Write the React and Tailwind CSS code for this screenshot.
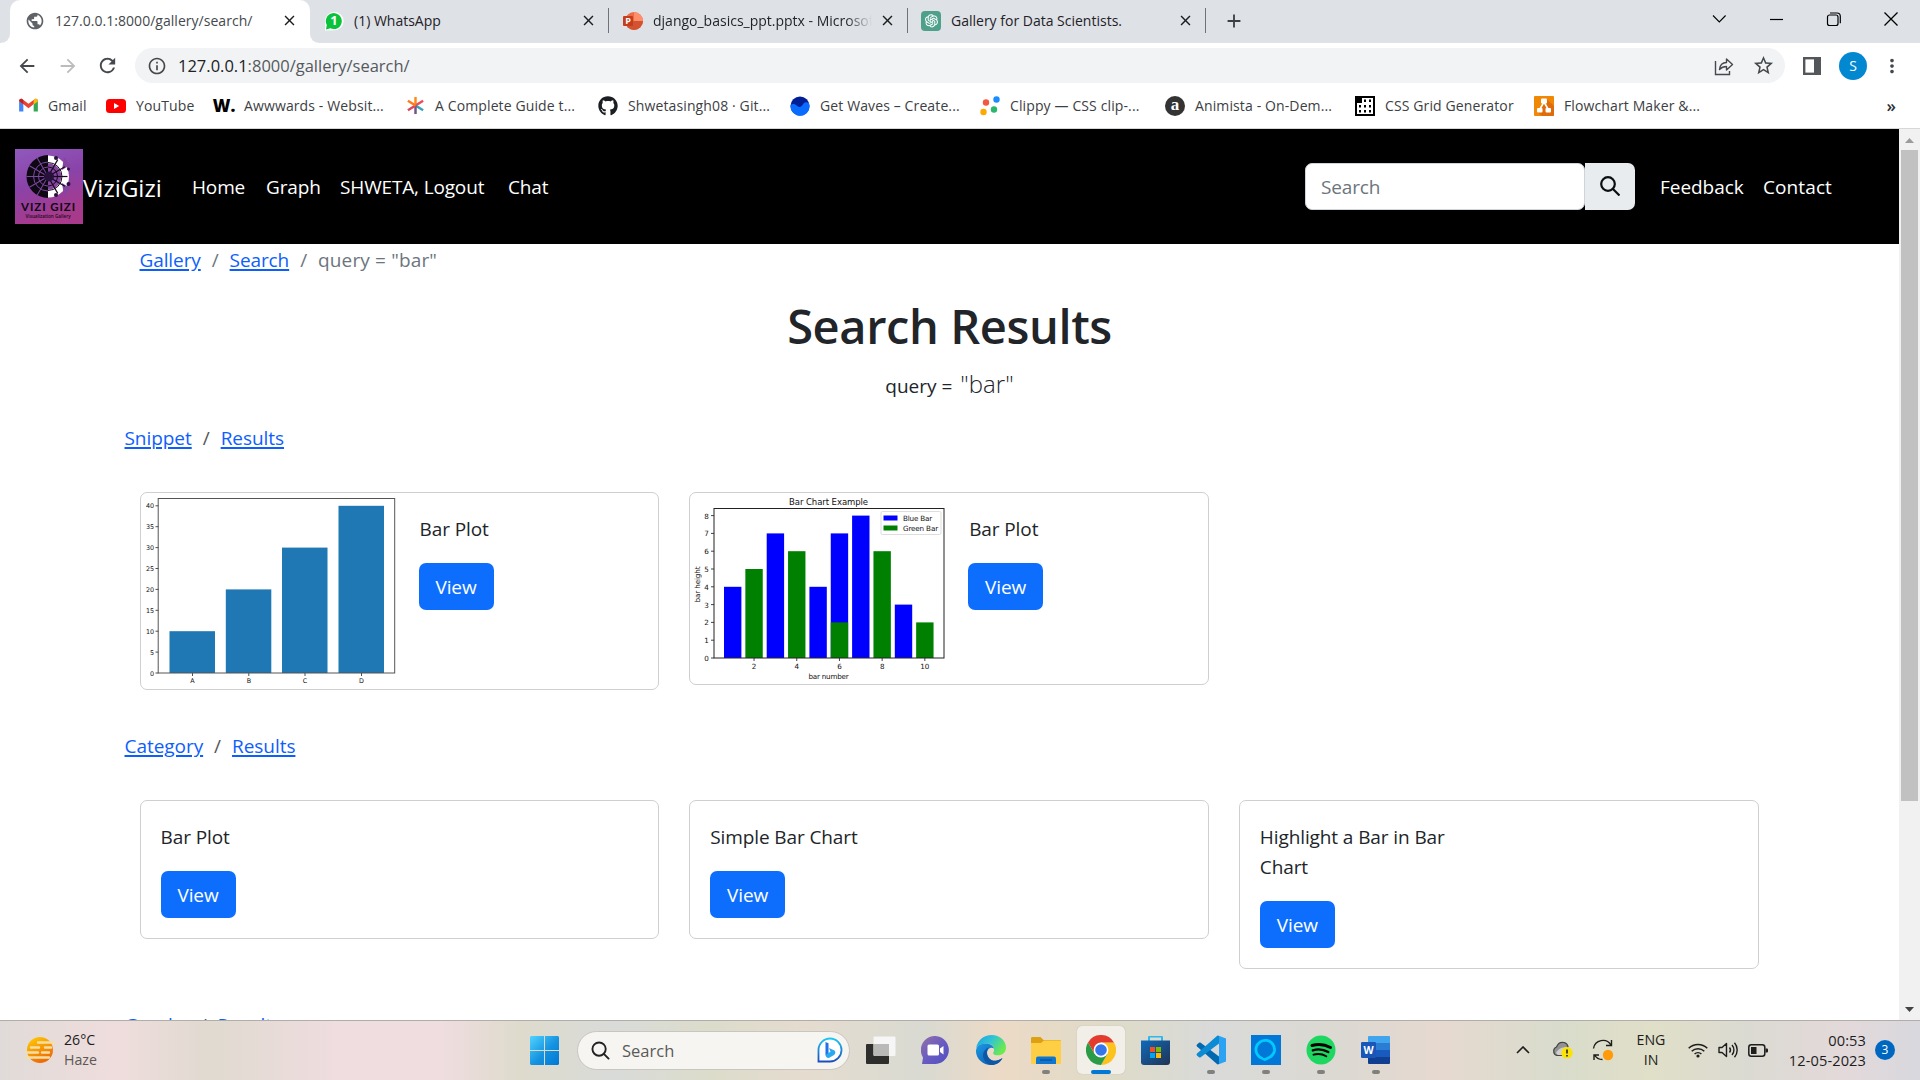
import React from "react";
import { MdArrowBack, MdArrowForward, MdRefresh, MdOutlineInfo, MdStarBorder, MdMoreVert, MdPublic, MdClose, MdAdd } from "react-icons/md";
import { FaGithub } from "react-icons/fa";
import { AiOutlineOpenAI } from "react-icons/ai";

/* ---------- browser chrome ---------- */

const WhatsAppIcon = () => (
  <svg viewBox="0 0 20 20" className="h-5 w-5 shrink-0">
    <path d="M1 19.5V10a9.3 9.3 0 1 1 9.3 9.3z" fill="#fff" />
    <path d="M2 18.6l.8-4.6A8 8 0 1 1 6.300 17.300z" fill="#0bc33a" />
    <text x="10" y="14.300" textAnchor="middle" fontSize="13" fontWeight="700" fill="#fff" fontFamily="Open Sans">1</text>
  </svg>
);

const PowerpointIcon = () => (
  <svg viewBox="0 0 20 20" className="h-5 w-5 shrink-0">
    <circle cx="11" cy="10" r="9" fill="#ed6c47" />
    <path d="M11 1a9 9 0 0 1 9 9h-9z" fill="#ff8f6b" />
    <path d="M2 10h18a9 9 0 0 1-18 0z" fill="#d35230" />
    <rect x="0" y="5" width="10" height="10" rx="1" fill="#c43e1c" />
    <text x="5" y="13.200" textAnchor="middle" fontSize="9" fontWeight="700" fill="#fff" fontFamily="Open Sans">P</text>
  </svg>
);

const OpenAiIcon = () => (
  <span className="flex h-5 w-5 shrink-0 items-center justify-center rounded-[4px] bg-[#4fa08b] text-white">
    <AiOutlineOpenAI size={17} />
  </span>
);

function Tab({ icon, title, width, pad, divider, fade, titleWidth }) {
  return (
    <div className={`flex h-[43px] items-center pb-[2px] ${width} ${pad}`}>
      {icon}
      <span className={`ml-[10px] overflow-hidden text-[14px] whitespace-nowrap text-[#1f2226] ${titleWidth} ${fade ? "[mask-image:linear-gradient(90deg,#000_88%,transparent)]" : ""}`}>{title}</span>
      <MdClose size={17} className="ml-auto shrink-0 text-[#1c1d1f]" />
      <span className={`ml-[11px] h-[25px] w-px ${divider ? "bg-[#6f7276]" : ""}`} />
    </div>
  );
}

function TabStrip() {
  return (
    <div className="flex h-[43px] bg-[#dee1e6]">
      <div className="flex h-full w-[10px] bg-white">
        <div className="h-full w-full rounded-br-[9px] bg-[#dee1e6]" />
      </div>
      <div className="w-[300px] bg-[#dee1e6]">
        <div className="flex h-[43px] items-center rounded-t-[10px] bg-white pb-[2px] pl-[15px]">
          <MdPublic size={20} className="shrink-0 text-[#5f6368]" />
          <span className="ml-[10px] text-[14px] tracking-[0.03px] whitespace-nowrap text-[#45494d]">127.0.0.1:8000/gallery/search/</span>
          <MdClose size={17} className="mr-[12px] ml-auto shrink-0 text-[#1c1d1f]" />
        </div>
      </div>
      <div className="flex h-full bg-white">
        <div className="flex h-full rounded-bl-[9px] bg-[#dee1e6]">
          <Tab icon={<WhatsAppIcon />} title="(1) WhatsApp" width="w-[299px]" pad="pl-[14px]" titleWidth="w-[200px]" divider />
          <Tab icon={<PowerpointIcon />} title="django_basics_ppt.pptx - Microsoft" width="w-[299px]" pad="pl-[14px]" titleWidth="w-[219px]" divider fade />
          <Tab icon={<OpenAiIcon />} title="Gallery for Data Scientists." width="w-[298px]" pad="pl-[13px]" titleWidth="w-[200px]" divider />
        </div>
      </div>
      <div className="flex h-[41px] w-[56px] items-center justify-center text-[#3c4043]">
        <MdAdd size={22} />
      </div>
      <div className="ml-auto flex h-[37px] items-center text-black">
        <svg width="57" height="20" viewBox="0 0 57 20" fill="none" stroke="currentColor" strokeWidth="1.1"><path d="M22 6.500l6.300 6.500 6.300-6.500" /></svg>
        <svg width="57" height="20" viewBox="0 0 57 20" fill="none" stroke="currentColor" strokeWidth="1.2"><path d="M22 10.500h13" /></svg>
        <svg width="58" height="20" viewBox="0 0 58 20" fill="none" stroke="currentColor" strokeWidth="1.2"><rect x="22.500" y="6" width="10.500" height="10.500" rx="2" /><path d="M25 4h7a3.300 3.300 0 0 1 3.300 3.300v7" /></svg>
        <svg width="57" height="20" viewBox="0 0 57 20" fill="none" stroke="currentColor" strokeWidth="1.300"><path d="M21.500 3.500l13 13M34.500 3.500l-13 13" /></svg>
      </div>
    </div>
  );
}

function Toolbar() {
  return (
    <div className="flex h-[47px] items-center bg-white pb-[2px] text-[#45494d]">
      <MdArrowBack size={22} className="ml-[16px]" />
      <MdArrowForward size={22} className="ml-[19px] text-[#babcbe]" />
      <MdRefresh size={23} className="ml-[17px]" />
      <div className="ml-[16px] flex h-[35px] w-[1650px] items-center rounded-full bg-[#f1f3f4] pr-[10px] pl-[12px]">
        <MdOutlineInfo size={20} />
        <span className="mt-px ml-[11px] text-[16.500px] whitespace-nowrap text-[#55595e]"><span className="text-[#202124]">127.0.0.1</span>:8000/gallery/search/</span>
        <svg viewBox="0 0 20 20" className="ml-auto h-[20px] w-[20px]" fill="none" stroke="currentColor" strokeWidth="1.4"><path d="M1.500 5v13.500h14V15" /><path d="M5.500 13.500c.5-4.500 3-7 7-7V3l6 5.500-6 5.500v-3.500c-3 0-5 .8-7 3z" strokeLinejoin="round" /></svg>
        <MdStarBorder size={23} className="ml-[18px] text-[#45494d]" />
      </div>
      <svg viewBox="0 0 18 18" className="ml-[18px] h-[18px] w-[18px]"><rect x="1.200" y="1.200" width="15.600" height="15.600" fill="none" stroke="#53575c" strokeWidth="2.400" /><rect x="11" y="1" width="6" height="16" fill="#53575c" /></svg>
      <span className="ml-[18px] flex h-[28px] w-[28px] items-center justify-center rounded-full bg-[#0288d1] text-[14px] text-white">S</span>
      <MdMoreVert size={22} className="ml-[14px]" />
    </div>
  );
}

const bookmarks = [
  { w: "w-[88px]", label: "Gmail", icon: <svg viewBox="0 0 20 16" className="h-[15px] w-[19px]"><path d="M0 3v11.500h4.500V7z" fill="#4285f4" /><path d="M20 3v11.500h-4.500V7z" fill="#34a853" /><path d="M0 3C0 .8 2 .2 3.500 1.300L10 6l6.500-4.700C18 .2 20 .8 20 3l-10 7.800z" fill="#ea4335" /><path d="M15.500 2v5L20 3.500C20 1 18 .2 16.500 1.300z" fill="#fbbc04" /><path d="M4.500 2v5L0 3.500C0 1 2 .2 3.500 1.300z" fill="#c5221f" /></svg> },
  { w: "w-[108px]", label: "YouTube", icon: <svg viewBox="0 0 20 14" className="h-[14px] w-[20px]"><rect width="20" height="14" rx="3.500" fill="#f00" /><path d="M8 4l5.200 3L8 10z" fill="#fff" /></svg> },
  { w: "w-[191px]", label: "Awwwards - Websit...", icon: <span className="text-[17px] leading-none font-extrabold text-black">W.</span> },
  { w: "w-[193px]", label: "A Complete Guide t...", icon: <svg viewBox="0 0 20 20" className="h-[19px] w-[19px]" fill="none" strokeWidth="2.600"><path d="M10 10V1" stroke="#ff8a18" /><path d="M10 10l8-5" stroke="#ef4b56" /><path d="M10 10l8 5" stroke="#38a3b5" /><path d="M10 10v9" stroke="#71558a" /><path d="M10 10l-8 5" stroke="#e0455c" /><path d="M10 10L2 5" stroke="#ff7a18" /></svg> },
  { w: "w-[192px]", label: "Shwetasingh08 · Git...", icon: <FaGithub size={20} color="#1b1f23" /> },
  { w: "w-[190px]", label: "Get Waves – Create...", icon: <svg viewBox="0 0 20 20" className="h-5 w-5"><circle cx="10" cy="10" r="9.500" fill="#001e96" /><path d="M.6 9c2-1.500 4-1.500 6.400.8 3 2.800 5 0 6-1.600 1.500-2.200 4-2.300 6-1A9.500 9.500 0 1 1 .6 9z" fill="#0a6cff" /></svg> },
  { w: "w-[185px]", label: "Clippy — CSS clip-...", icon: <svg viewBox="0 0 20 20" className="h-5 w-5"><circle cx="6" cy="6.500" r="3.200" fill="#f4583f" /><circle cx="16.500" cy="3.500" r="3.200" fill="#1a8cff" /><circle cx="14" cy="13.500" r="3.200" fill="#2cb56c" /><circle cx="3.500" cy="16" r="3.200" fill="#ffa800" /></svg> },
  { w: "w-[190px]", label: "Animista - On-Dem...", icon: <span className="flex h-5 w-5 items-center justify-center rounded-full bg-[#333] pb-[2px] font-['Liberation_Serif',serif] text-[17px] leading-none font-bold text-white">a</span> },
  { w: "w-[179px]", label: "CSS Grid Generator", icon: <svg viewBox="0 0 20 20" className="h-5 w-5"><rect x="1" y="1" width="18" height="18" fill="#fff" stroke="#000" strokeWidth="2" /><path d="M0 0h7v7H0zM9 3.500h2v2.500H9zM14 3.500h2v2.500h-2zM4 9h2v2.500H4zM9 9h2v2.500H9zM14 9h2v2.500h-2zM4 14h2v2.500H4zM9 14h2v2.500H9zM14 14h2v2.500h-2z" fill="#000" /></svg> },
  { w: "w-[190px]", label: "Flowchart Maker &...", icon: <svg viewBox="0 0 20 20" className="h-5 w-5"><rect width="20" height="20" rx="1" fill="#f08705" /><path d="M12.500 3l7.500 7v9a1 1 0 0 1-1 1H8l-4.500-4z" fill="#df6c0c" /><path d="M10 6l-4 7M10 6l4 7" stroke="#fff" strokeWidth="1.600" /><rect x="7" y="2.500" width="6" height="5" rx="1" fill="#fff" /><rect x="3" y="12" width="5.500" height="4.500" rx="1" fill="#fff" /><rect x="11.500" y="12" width="5.500" height="4.500" rx="1" fill="#fff" /></svg> },
];

function BookmarksBar() {
  return (
    <div className="flex h-[39px] items-center border-b border-[#d5d7da] bg-white pb-[7px] pl-[18px]">
      {bookmarks.map((b) => (
        <div key={b.label} className={`flex shrink-0 items-center ${b.w}`}>
          <span className="flex w-5 shrink-0 items-center justify-center">{b.icon}</span>
          <span className="ml-[10px] text-[14px] tracking-[0.12px] whitespace-nowrap text-[#3c4043]">{b.label}</span>
        </div>
      ))}
      <span className="mr-[24px] ml-auto text-[17px] leading-none font-semibold text-[#2c2f33]">»</span>
    </div>
  );
}

/* ---------- site ---------- */

function Logo() {
  const spokes = [0, 30, 60, 90, 120, 150, 180, 210, 240, 270, 300, 330];
  return (
    <svg viewBox="0 0 68 75" className="h-[75px] w-[68px] shrink-0">
      <defs>
        <linearGradient id="lg" x1="0" y1="0" x2=".3" y2="1">
          <stop offset="0" stopColor="#9059bd" /><stop offset=".5" stopColor="#8a43a8" /><stop offset="1" stopColor="#a83a8c" />
        </linearGradient>
      </defs>
      <rect width="68" height="75" fill="url(#lg)" />
      <path d="M33 6a21.500 21.500 0 0 0 0 43z" fill="#0d0812" />
      <path d="M33 6.500a21 21 0 0 1 0 42v-8a13 13 0 0 0 0-26z" fill="#fff" />
      <path d="M33 14.500a13 13 0 0 1 0 26z" fill="#84459f" />
      <path d="M49 8l6 8-8 5zM49 47l6-8-8-5z" fill="#84459f" />
      <g stroke="#7d48a3" strokeWidth="1" fill="none">
        <path d="M33 13a14.500 14.500 0 0 0 0 29M33 18a9.500 9.500 0 0 0 0 19" />
        {spokes.slice(7).map((a) => <path key={a} d="M33 27.500V6" transform={`rotate(${a} 33 27.500)`} />)}
      </g>
      <g stroke="#15091c" strokeWidth="1.200" fill="none">
        {spokes.slice(1, 6).map((a) => <path key={a} d="M33 27.500V8" transform={`rotate(${a} 33 27.500)`} />)}
        <path d="M33 18a9.500 9.500 0 0 1 0 19M33 13.500a14 14 0 0 1 0 28" strokeWidth="1" />
      </g>
      <g fill="#26123a"><circle cx="41" cy="9" r="2" /><circle cx="53.500" cy="20" r="1.500" /><circle cx="53.500" cy="35" r="2" /><circle cx="41" cy="46" r="2" /><circle cx="34" cy="27.500" r="5" /></g>
      <text x="33" y="61.500" textAnchor="middle" fontSize="11.500" fontWeight="700" fill="#0d0812" fontFamily="Lato, sans-serif" textLength="54">VIZI GIZI</text>
      <text x="33" y="68.500" textAnchor="middle" fontSize="4.600" fontWeight="600" fill="#1d0a20" fontFamily="Open Sans" textLength="45">Visualization Gallery</text>
    </svg>
  );
}

function Navbar() {
  return (
    <nav className="flex h-[115px] shrink-0 items-center bg-black pr-[66px] pb-px pl-[15px] text-[19px] tracking-[-0.15px] whitespace-nowrap text-white">
      <Logo />
      <a className="w-[109px] pt-[3px] text-[24px] tracking-[0.05px]">ViziGizi</a>
      <a className="w-[74px] pt-[3px]">Home</a>
      <a className="w-[74px] pt-[3px]">Graph</a>
      <a className="w-[168px] pt-[3px]">SHWETA, Logout</a>
      <a className="pt-[3px]">Chat</a>
      <div className="mr-[25px] ml-auto flex h-[47px] w-[330px]">
        <div className="flex w-[280px] items-center rounded-[7px] border border-[#ced4da] bg-white pt-[3px] pl-[15px] text-[#6c757d]">Search</div>
        <div className="flex w-[50px] items-center justify-center rounded-r-[7px] bg-[#e9ecef]">
          <svg viewBox="0 0 20 20" className="h-5 w-5" fill="none" stroke="#0b0d10" strokeWidth="2.200"><circle cx="8" cy="8" r="6.800" /><path d="M13 13l6.500 6.500" /></svg>
        </div>
      </div>
      <a className="w-[103px] pt-[3px] tracking-[-0.05px]">Feedback</a>
      <a className="w-[70px] pt-[3px] tracking-[0.1px]">Contact</a>
    </nav>
  );
}

const Link = ({ children }) => (
  <a className="text-[#0d5efd] underline decoration-[1.500px] underline-offset-[2px]">{children}</a>
);

const SectionTrail = ({ name }) => (
  <div className="-ml-[15px] flex h-[30px] items-center gap-[11px] tracking-[-0.05px]">
    <Link>{name}</Link><span className="text-[#555]">/</span><Link>Results</Link>
  </div>
);

const ViewButton = () => (
  <button className="flex h-[47px] w-[75px] items-center justify-center rounded-[7px] bg-[#0d6efd] pt-[2px] text-[19px] tracking-[-0.1px] text-white">View</button>
);

function PlotABCD() {
  const bars = [["A", 29, 10], ["B", 85.300, 20], ["C", 141.500, 30], ["D", 198, 40]];
  return (
    <svg viewBox="0 0 256 195" className="h-[195px] w-[256px] shrink-0" fontFamily="DejaVu Sans" fontSize="6.400" fill="#111">
      {bars.map(([l, x, v]) => (
        <g key={l}>
          <rect x={x - 0.500} y={180 - v * 4.180} width="45.500" height={v * 4.180} fill="#1f77b4" />
          <path d={`M${x + 22.500} 180v3`} stroke="#222" strokeWidth=".8" />
          <text x={x + 22.500} y="190" textAnchor="middle">{l}</text>
        </g>
      ))}
      {[0, 5, 10, 15, 20, 25, 30, 35, 40].map((v) => (
        <g key={v}>
          <path d={`M14.500 ${180 - v * 4.180}h3`} stroke="#222" strokeWidth=".8" />
          <text x="13" y={182.500 - v * 4.180} textAnchor="end">{v}</text>
        </g>
      ))}
      <rect x="17.200" y="5.500" width="236.500" height="174.500" fill="none" stroke="#555" />
    </svg>
  );
}

function PlotBlueGreen() {
  const blue = [[1, 4], [3, 7], [5, 4], [6, 7], [7, 8], [9, 3]];
  const green = [[2, 5], [4, 6], [6, 2], [8, 6], [10, 2]];
  const x = (n) => 42.700 + (n - 1) * 21.350;
  const y = (v) => 165 - v * 17.800;
  return (
    <svg viewBox="0 0 256 190" className="h-[190px] w-[256px] shrink-0" fontFamily="DejaVu Sans" fontSize="7.200" fill="#111">
      {blue.map(([n, v]) => <rect key={n} x={x(n) - 8.700} y={y(v)} width="17.400" height={v * 17.800} fill="#00f" />)}
      {green.map(([n, v]) => <rect key={n} x={x(n) - 8.700} y={y(v)} width="17.400" height={v * 17.800} fill="#008000" />)}
      {[0, 1, 2, 3, 4, 5, 6, 7, 8].map((v) => (
        <g key={v}><path d={`M21 ${y(v)}h3`} stroke="#111" strokeWidth=".8" /><text x="18.800" y={y(v) + 3} textAnchor="end">{v}</text></g>
      ))}
      {[2, 4, 6, 8, 10].map((n) => (
        <g key={n}><path d={`M${x(n)} 165v3`} stroke="#111" strokeWidth=".8" /><text x={x(n)} y="176" textAnchor="middle">{n}</text></g>
      ))}
      <rect x="24" y="15.500" width="230" height="149.500" fill="none" stroke="#222" />
      <text x="138.500" y="11.500" textAnchor="middle" fontSize="8.500" textLength="79">Bar Chart Example</text>
      <text x="138.500" y="185.500" textAnchor="middle" textLength="40">bar number</text>
      <text x="9.500" y="91.500" textAnchor="middle" transform="rotate(-90 9.500 91.500)" textLength="36">bar height</text>
      <rect x="191" y="18.500" width="60" height="23" rx="1.500" fill="#fff" fillOpacity=".8" stroke="#ddd" />
      <rect x="193.500" y="22.500" width="14" height="5" fill="#00f" />
      <rect x="193.500" y="32.500" width="14" height="5" fill="#008000" />
      <text x="213" y="27.800" textLength="29">Blue Bar</text>
      <text x="213" y="38" textLength="35">Green Bar</text>
    </svg>
  );
}

const cardBase = "flex rounded-[7px] border border-[#cfcfcf] bg-white";

function SnippetCard({ plot, height }) {
  return (
    <div className={`${cardBase} ${height}`}>
      {plot}
      <div className="flex flex-col items-start pt-[20px] pl-[22px]">
        <p className="h-[50px] pl-px leading-[32px]">Bar Plot</p>
        <ViewButton />
      </div>
    </div>
  );
}

function CategoryCard({ title }) {
  return (
    <div className={`${cardBase} flex-col items-start self-start pt-[21px] pb-[20px] pl-[20px]`}>
      <p className="mb-[19px] w-[200px] leading-[30px]">{title}</p>
      <ViewButton />
    </div>
  );
}

function Page() {
  return (
    <main className="flex h-[891px] w-[1899px] flex-col overflow-hidden bg-white">
      <Navbar />
      <div className="flex w-[1758.500px] flex-col pl-[139.500px] text-[19px] tracking-[-0.1px] text-[#212529]">
        <div className="flex h-[32px] items-center gap-[11px] text-[#6c757d]">
          <Link>Gallery</Link><span>/</span><Link>Search</Link><span>/</span><span className="tracking-[0.15px]">query = "bar"</span>
        </div>
      </div>
      <h1 className="mt-[20px] text-center text-[47px] leading-[60px] font-semibold tracking-[-0.4px] text-[#212529]">Search Results</h1>
      <p className="mt-[9px] flex h-[38px] items-baseline justify-center gap-[8px] text-[19px] text-[#212529]">
        query = <span className="text-[24px] leading-[38px] font-light">"bar"</span>
      </p>
      <div className="flex w-[1758.500px] flex-col pl-[139.500px] text-[19px] tracking-[-0.1px] text-[#212529]">
        <div className="mt-[20px]"><SectionTrail name="Snippet" /></div>
        <div className="mt-[39px] grid grid-cols-3 items-start gap-[30px]">
          <SnippetCard plot={<PlotABCD />} height="h-[198px]" />
          <SnippetCard plot={<PlotBlueGreen />} height="h-[193px]" />
        </div>
        <div className="mt-[41px]"><SectionTrail name="Category" /></div>
        <div className="mt-[39px] grid grid-cols-3 items-start gap-[30px]">
          <CategoryCard title="Bar Plot" />
          <CategoryCard title="Simple Bar Chart" />
          <CategoryCard title="Highlight a Bar in Bar Chart" />
        </div>
        <div className="mt-[41px]"><SectionTrail name="Graphs" /></div>
      </div>
    </main>
  );
}

function Scrollbar() {
  return (
    <div className="flex h-[891px] w-[21px] flex-col items-center bg-[#f1f1f1]">
      <svg viewBox="0 0 21 21" className="h-[21px] w-[21px] shrink-0"><path d="M6 14l4.500-5 4.500 5z" fill="#9b9b9b" /></svg>
      <div className="h-[651px] w-[17px] shrink-0 bg-[#c1c1c1]" />
      <svg viewBox="0 0 21 21" className="mt-auto h-[21px] w-[21px] shrink-0"><path d="M6 8l4.500 5L15 8z" fill="#444" /></svg>
    </div>
  );
}

/* ---------- taskbar ---------- */

const Weather = () => (
  <svg viewBox="0 0 30 28" className="h-[28px] w-[30px] shrink-0">
    <defs><linearGradient id="sun" x1="0" y1="0" x2=".5" y2="1"><stop offset="0" stopColor="#ffd000" /><stop offset="1" stopColor="#ee6a0a" /></linearGradient></defs>
    <circle cx="15" cy="14" r="13" fill="url(#sun)" />
    <path d="M13 6.500h16M6 11.500h8M20 11.500h6M1 16.500h12M17 16.500h7M1 21.500h23" stroke="#f3dfa3" strokeWidth="2.400" strokeLinecap="round" />
  </svg>
);

const WindowsIcon = () => (
  <svg viewBox="0 0 29 29" className="h-[29px] w-[29px]">
    <defs><linearGradient id="win" gradientUnits="userSpaceOnUse" x1="0" y1="0" x2="29" y2="29"><stop offset="0" stopColor="#4fd3ff" /><stop offset=".55" stopColor="#1492e0" /><stop offset="1" stopColor="#0078d4" /></linearGradient></defs>
    <path d="M1 0h13v14H0V1zM15 0h13l1 1v13H15zM0 15h14v14H1l-1-1zM15 15h14v13l-1 1H15z" fill="url(#win)" />
  </svg>
);

const BingIcon = () => (
  <svg viewBox="0 0 26 26" className="h-[26px] w-[26px]">
    <defs><linearGradient id="bing" x1="0" y1="0" x2="0" y2="1"><stop offset="0" stopColor="#1fc6f2" /><stop offset="1" stopColor="#1b4dbb" /></linearGradient></defs>
    <path d="M1.500 24.500V13A11.500 11.500 0 1 1 13 24.500z" fill="#fff" stroke="url(#bing)" strokeWidth="1.800" />
    <path d="M8.500 5l3 1.200v13l-3-1.200z" fill="#2470e8" /><path d="M8.500 17.800l5-3-1.500-3.800 5 2.300c2 1.200 1.500 3.700 0 4.700l-4.300 2.600c-1.800.9-4.200-.3-4.200-2.800z" fill="#29a9ee" />
  </svg>
);

const TaskViewIcon = () => (
  <svg viewBox="0 0 30 28" className="h-[28px] w-[30px]">
    <rect x="0" y="8" width="23" height="20" rx="1" fill="#2e2e2c" />
    <rect x="7.500" y="0.500" width="22" height="19.500" rx="1" fill="#f6f6f6" />
    <path d="M7.500 8H23v12H8.500l-1-1z" fill="#b9b9b7" />
  </svg>
);

const ChatIcon = () => (
  <svg viewBox="0 0 29 29" className="h-[29px] w-[29px]">
    <defs><linearGradient id="chat" x1="0" y1="0" x2="1" y2="1"><stop offset="0" stopColor="#9570a8" /><stop offset=".5" stopColor="#6a5cc0" /><stop offset="1" stopColor="#4f4fc4" /></linearGradient></defs>
    <path d="M1 28l1-6.500A14 14 0 1 1 14.500 28z" fill="url(#chat)" />
    <rect x="6.500" y="8.500" width="11.500" height="11" rx="1.500" fill="#fff" /><path d="M19 12.500l3.500-2.500v8.500L19 16z" fill="#fff" />
  </svg>
);

const EdgeIcon = () => (
  <svg viewBox="0 0 30 30" className="h-[30px] w-[30px]">
    <defs>
      <linearGradient id="e1" x1="0" y1="0" x2="1" y2=".5"><stop offset="0" stopColor="#1b9fe0" /><stop offset=".5" stopColor="#2fc3d8" /><stop offset="1" stopColor="#6bea4e" /></linearGradient>
      <linearGradient id="e2" x1="0" y1="0" x2="1" y2="1"><stop offset="0" stopColor="#1a9ae8" /><stop offset="1" stopColor="#0c4f9e" /></linearGradient>
    </defs>
    <path d="M0 13.500C1.500 5 8 0 15.500 0 24 0 30 6 30 12.500c0 5-3.800 7.800-8 7.800-4 0-5.700-1.500-4.500-3 1.200-1.800.8-7.300-4.500-8.500C7 7.500 2 10 0 13.500z" fill="url(#e1)" />
    <path d="M0 15.500C.5 11 4.500 8.500 9.500 8.500c4.500 0 7.500 2 8.500 5-3-2-7 .5-7 4.500 0 5 5 9 10 7.500 2-.6 4-1.500 5.500-2.500C24.500 27.500 20 30 15 30 6.500 30-.5 23 0 15.500z" fill="url(#e2)" />
    <path d="M11 18c0 5 5 9 10 7.500 2-.6 4-1.500 5.500-2.500C24 27.500 20 30 15 30c-4-1-8-5-8-10 0-3 2-6 6-8-1.500 1.500-2 4-2 6z" fill="#0d57a7" />
  </svg>
);

const FolderIcon = () => (
  <svg viewBox="0 0 30 27" className="h-[27px] w-[30px]">
    <path d="M0 1.500C0 .5.500 0 1.500 0h8l3 3H29a1 1 0 0 1 1 1v5H0z" fill="#dea013" />
    <path d="M0 6h10l3-2.500h17V26a1 1 0 0 1-1 1H1a1 1 0 0 1-1-1z" fill="#fecf45" />
    <path d="M5 27v-5.500a2 2 0 0 1 2-2h16a2 2 0 0 1 2 2V27z" fill="#0f77cf" /><path d="M9 23h12" stroke="#0a4d92" strokeWidth="1.200" />
  </svg>
);

const ChromeIcon = () => (
  <svg viewBox="0 0 30 30" className="h-[30px] w-[30px]">
    <path d="M21.500 18.700L15 30A15 15 0 0 0 28 7.500H15z" fill="#fcc31e" />
    <path d="M2 7.500A15 15 0 0 1 28 7.500H15l-6.500 11z" fill="#e33b2e" />
    <path d="M2 7.500l6.500 11.200L15 15l6.500 3.700L15 30A15 15 0 0 1 2 7.500z" fill="#2a9c48" />
    <circle cx="15" cy="15" r="7.400" fill="#fff" /><circle cx="15" cy="15" r="5.800" fill="#3577ea" />
  </svg>
);

const StoreIcon = () => (
  <svg viewBox="0 0 29 29" className="h-[29px] w-[29px]">
    <defs><linearGradient id="st" x1="0" y1="0" x2="1" y2="1"><stop offset="0" stopColor="#0f6abb" /><stop offset="1" stopColor="#213353" /></linearGradient></defs>
    <path d="M8 5V1.500a1 1 0 0 1 1-1h11a1 1 0 0 1 1 1V5" fill="none" stroke="#2cb9ec" strokeWidth="2" />
    <path d="M0 4.500h29V26a3 3 0 0 1-3 3H3a3 3 0 0 1-3-3z" fill="url(#st)" />
    <path d="M9 11h5v5H9z" fill="#f25022" /><path d="M15 11h5v5h-5z" fill="#7fba00" /><path d="M9 17h5v5H9z" fill="#00a4ef" /><path d="M15 17h5v5h-5z" fill="#ffb900" />
  </svg>
);

const CodeIcon = () => (
  <svg viewBox="0 0 30 30" className="h-[30px] w-[30px]">
    <path d="M1 9.500l2-1.700c.6-.4 1.200-.3 1.700 0L23 21.500V29L21.500 29.500 1 11.500c-.6-.6-.6-1.400 0-2z" fill="#0069b0" />
    <path d="M1 20.500l2 1.700c.6.4 1.200.3 1.700 0L23 8.500V1L21.500.5 1 18.500c-.6.6-.6 1.400 0 2z" fill="#0c8ad4" />
    <path d="M21.500.2L30 3.500v23l-8.500 3.300c1 0 1.500-.5 1.500-1.500v-26.500c0-1-.5-1.600-1.500-1.600z" fill="#2ba3f2" />
  </svg>
);

const AlexaIcon = () => (
  <svg viewBox="0 0 30 30" className="h-[30px] w-[30px]"><rect width="30" height="30" fill="#0178d7" /><path d="M14.500 25.500v-1.300c4.300-1.500 8.200-4 9-8.500A9.300 9.300 0 1 0 11.500 23.500" fill="none" stroke="#00caff" strokeWidth="2.800" /><path d="M11 22.500l3.500 1v2.500c-1.500-.3-2.500-.7-3.500-1.200z" fill="#00caff" /></svg>
);

const SpotifyIcon = () => (
  <svg viewBox="0 0 30 30" className="h-[30px] w-[30px]" fill="none" stroke="#000" strokeLinecap="round"><circle cx="15" cy="15" r="14.500" fill="#1ed760" stroke="none" /><path d="M6 10.500c6-1.700 13-1 18.500 2" strokeWidth="2.900" /><path d="M6.800 15.300c5-1.500 11-.8 15.500 1.800" strokeWidth="2.300" /><path d="M7.500 19.700c4.500-1.200 9-.6 12.800 1.600" strokeWidth="1.900" /></svg>
);

const WordIcon = () => (
  <svg viewBox="0 0 30 28" className="h-[28px] w-[30px]">
    <path d="M8 0h20a1 1 0 0 1 1 1v6H7V1a1 1 0 0 1 1-1z" fill="#41a5ee" /><path d="M7 7h22v7H7z" fill="#2b7cd3" /><path d="M7 14h22v7H7z" fill="#185abd" /><path d="M7 21h22v6a1 1 0 0 1-1 1H8a1 1 0 0 1-1-1z" fill="#103f91" />
    <rect x="0" y="6" width="15" height="16" rx="1.200" fill="#1a56b8" />
    <text x="7.500" y="17.800" textAnchor="middle" fontSize="10.500" fontWeight="700" fill="#fff" fontFamily="Open Sans">W</text>
  </svg>
);

function TaskbarApp({ icon, open, active }) {
  return (
    <div className="flex w-[55px] justify-center">
      <div className={`flex h-[48px] w-[48px] flex-col items-center rounded-[5px] ${active ? "bg-[#f2eee8] shadow-[0_0_1px_#aaa]" : ""}`}>
        <div className="flex h-[44px] items-center pt-[4px]">{icon}</div>
        <span className={`h-[4px] shrink-0 rounded-full ${active ? "w-[20px] bg-[#0078d4]" : open ? "w-[8px] bg-[#80807c]" : ""}`} />
      </div>
    </div>
  );
}

function Taskbar() {
  return (
    <footer className="flex h-[60px] items-center border-t border-[#b1aeaa] bg-[linear-gradient(90deg,#e0dbd8_0%,#efdddd_6%,#e0dad0_11%,#f0dde0_18%,#efdddf_23%,#dedbcd_27%,#d9dbd9_32%,#dcdccb_37%,#e5dccf_42%,#d9dad2_48%,#ecdac6_52%,#dedbc8_58%,#d9dad9_63%,#dcd9d2_70%,#e6d9d0_75%,#d9dccc_81%,#e0dfc8_86%,#dbdad2_91%,#e3d9da_96%,#d8d8de_100%)] pb-px text-[#1d1d1d]">
      <div className="flex w-[530px] items-center pl-[25px]">
        <Weather />
        <div className="ml-[9px] text-[14.200px] leading-[20px]"><div>26°C</div><div className="text-[#5c5855]">Haze</div></div>
      </div>
      <WindowsIcon />
      <div className="ml-[18px] flex h-[39px] w-[273px] items-center rounded-full border border-[#c9c6c0] bg-[#f6f5f1] pr-[6px] pl-[13px]">
        <svg viewBox="0 0 20 20" className="h-[19px] w-[19px]" fill="none" stroke="#222" strokeWidth="2" strokeLinecap="round"><circle cx="8.500" cy="8.500" r="7" /><path d="M13.500 13.500l5 5" /></svg>
        <span className="mt-[2px] ml-[12px] text-[16.500px] text-[#5a5a58]">Search</span>
        <span className="ml-auto"><BingIcon /></span>
      </div>
      <div className="ml-[3px] flex">
        <TaskbarApp icon={<TaskViewIcon />} />
        <TaskbarApp icon={<ChatIcon />} />
        <TaskbarApp icon={<EdgeIcon />} />
        <TaskbarApp icon={<FolderIcon />} open />
        <TaskbarApp icon={<ChromeIcon />} active />
        <TaskbarApp icon={<StoreIcon />} />
        <TaskbarApp icon={<CodeIcon />} open />
        <TaskbarApp icon={<AlexaIcon />} open />
        <TaskbarApp icon={<SpotifyIcon />} open />
        <TaskbarApp icon={<WordIcon />} open />
      </div>
      <div className="ml-auto flex items-center">
        <svg viewBox="0 0 14 8" className="h-[8px] w-[14px]" fill="none" stroke="currentColor" strokeWidth="1.600"><path d="M1 7l6-6 6 6" /></svg>
        <svg viewBox="0 0 22 18" className="ml-[22px] h-[18px] w-[22px]"><path d="M5 14.500a4.500 4.500 0 0 1-.5-8.500C6 2 9 .8 12 1.500c2 .5 3.500 2 4 4l-4 9z" fill="#929292" stroke="#444" strokeWidth="1.200" /><path d="M4 12c2-4 6-6 11-6l-3 8H6z" fill="#d0d0d0" /><circle cx="15" cy="11.800" r="5.800" fill="#fbe30a" /><path d="M15 8.500v4M15 14v1.500" stroke="#222" strokeWidth="1.600" /></svg>
        <svg viewBox="0 0 22 22" className="ml-[18px] h-[22px] w-[22px]" fill="none" stroke="currentColor" strokeWidth="1.400"><path d="M1.500 9.500A9.500 9.500 0 0 1 19 6M19.500 1v5.500H14M2 21v-5h5M2.500 16c2 3.500 5 4.500 8 4.500" /><circle cx="16" cy="16" r="5.200" fill="#ff9a0a" stroke="none" /></svg>
        <div className="ml-[21px] w-[32px] text-center text-[14.200px] leading-[20px]">ENG<br />IN</div>
        <svg viewBox="0 0 20 16" className="ml-[21px] h-[16px] w-[20px]" fill="none" stroke="currentColor" strokeWidth="1.500"><path d="M.7 6.300a13 13 0 0 1 18.600 0M3.700 9.300a9 9 0 0 1 12.600 0M6.600 12a5 5 0 0 1 6.800 0" /><circle cx="10" cy="14" r="1.600" fill="currentColor" stroke="none" /></svg>
        <svg viewBox="0 0 20 18" className="ml-[10px] h-[18px] w-[20px]" fill="none" stroke="currentColor" strokeWidth="1.400"><path d="M1 6.500h3L8.500 2.500v13L4 11.500H1z" strokeLinejoin="round" /><path d="M11.500 6.500a4 4 0 0 1 0 5M14 4a7.500 7.500 0 0 1 0 10M16.500 1.800a11 11 0 0 1 0 14.400" /></svg>
        <svg viewBox="0 0 20 13" className="ml-[10px] h-[13px] w-[20px]"><rect x=".8" y=".8" width="16" height="11.400" rx="2.500" fill="none" stroke="#1d1d1d" strokeWidth="1.500" /><rect x="3" y="3" width="5.500" height="7" fill="#1d1d1d" /><path d="M17.500 4.500h1.500a1 1 0 0 1 1 1v2a1 1 0 0 1-1 1h-1.500z" fill="#1d1d1d" /></svg>
        <div className="ml-[20px] w-[78px] text-right text-[14.600px] leading-[20px] tracking-[0.1px] whitespace-nowrap">00:53<br />12-05-2023</div>
        <span className="mr-[25px] ml-[9px] flex h-[20px] w-[20px] items-center justify-center rounded-full bg-[#0067c0] text-[12px] leading-none text-white">3</span>
      </div>
    </footer>
  );
}

export default function App() {
  return (
    <div className="h-[1080px] w-[1920px] overflow-hidden bg-white font-['Open_Sans','Noto_Sans',sans-serif]">
      <TabStrip />
      <Toolbar />
      <BookmarksBar />
      <div className="flex">
        <Page />
        <Scrollbar />
      </div>
      <Taskbar />
    </div>
  );
}
